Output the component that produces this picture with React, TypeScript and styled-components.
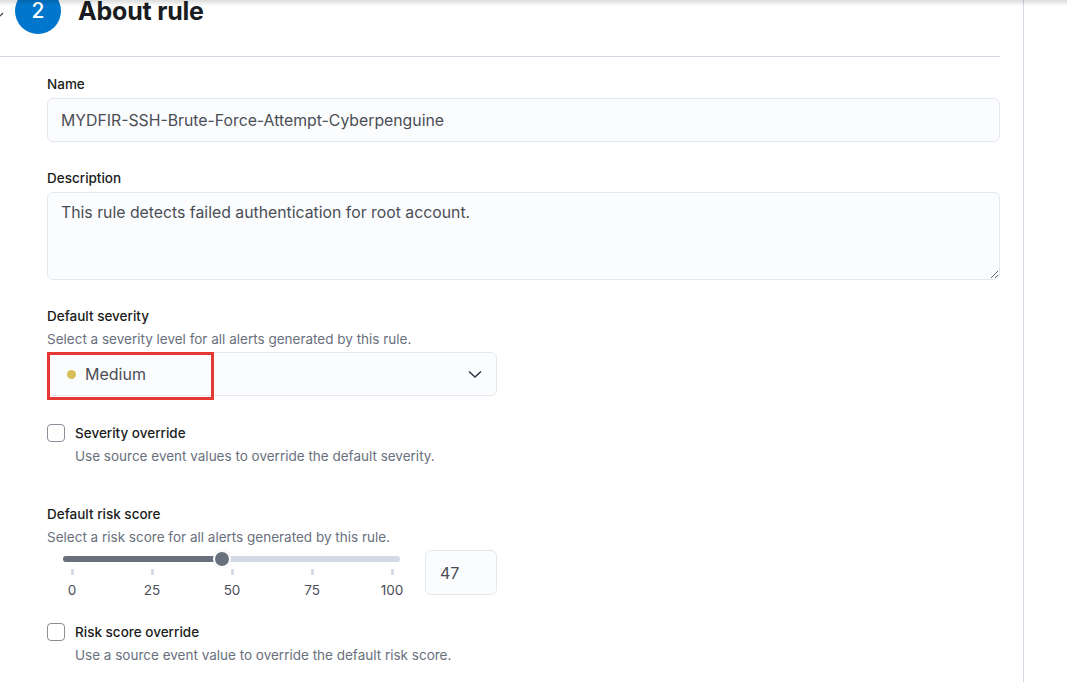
import React from "react";
import styled, { createGlobalStyle } from "styled-components";

const GlobalStyle = createGlobalStyle`
    html, body {
        margin: 0;
        padding: 0;
        background: #ffffff;
        font-family: Inter, "Noto Sans", sans-serif;
        color: #343741;
        overflow: hidden;
    }
`;

const Page = styled.div`
    position: relative;
    display: flex;
    width: 1067px;
    height: 682px;
    overflow: hidden;
`;

const TopShadow = styled.div`
    position: absolute;
    top: 0;
    left: 0;
    right: 0;
    height: 6px;
    background: linear-gradient(to bottom, rgba(0, 0, 0, 0.14), rgba(0, 0, 0, 0));
    pointer-events: none;
    z-index: 2;
`;

const Panel = styled.div`
    width: 1000px;
    padding-right: 23px;
    border-right: 1px solid #d3dae6;
    flex-shrink: 0;
`;

const StepHeader = styled.div`
    display: flex;
    align-items: center;
    height: 69px;
    padding-bottom: 23px;
    margin-top: -12px;
    border-bottom: 1px solid #d3dae6;
    box-sizing: border-box;
`;

const Collapse = styled.svg`
    width: 8px;
    height: 8px;
    margin-left: -4px;
    margin-top: 8px;
    color: #343741;
`;

const StepNumber = styled.div`
    width: 46px;
    height: 46px;
    margin-left: 11px;
    border-radius: 50%;
    background: #0077cc;
    color: #ffffff;
    display: flex;
    align-items: center;
    justify-content: center;
    font-size: 21px;
    font-weight: 500;
`;

const StepTitle = styled.h2`
    margin: 0 0 0 17px;
    font-size: 25px;
    font-weight: 700;
    color: #1a1c21;
    letter-spacing: -0.2px;
`;

const Form = styled.div`
    display: flex;
    flex-direction: column;
    padding: 18px 0 0 47px;
`;

const Field = styled.div<{ gap?: number }>`
    display: flex;
    flex-direction: column;
    margin-bottom: ${({ gap }) => gap ?? 0}px;
`;

const Label = styled.div`
    font-size: 13.5px;
    font-weight: 500;
    color: #1a1c21;
    line-height: 18px;
    margin-bottom: 5px;
`;

const Help = styled.div<{ indent?: boolean }>`
    font-size: 13.5px;
    color: #69707d;
    line-height: 18px;
    margin-top: ${({ indent }) => (indent ? "5px" : "0")};
    margin-bottom: ${({ indent }) => (indent ? "0" : "4px")};
    padding-left: ${({ indent }) => (indent ? "28px" : "0")};
`;

const TextInput = styled.div`
    height: 44px;
    box-sizing: border-box;
    background: #fbfcfd;
    border: 1px solid #e4e7ee;
    border-radius: 6px;
    padding: 0 13px;
    display: flex;
    align-items: center;
    font-size: 15.8px;
    color: #4a4e57;
`;

const TextArea = styled.textarea`
    height: 88px;
    box-sizing: border-box;
    background: #fbfcfd;
    border: 1px solid #e4e7ee;
    border-radius: 6px;
    padding: 9px 13px;
    font-family: Inter, "Noto Sans", sans-serif;
    font-size: 15.8px;
    line-height: 22px;
    color: #4a4e57;
    resize: vertical;
    outline: none;
`;

const SelectWrap = styled.div`
    position: relative;
    width: 450px;
`;

const Select = styled.div`
    height: 44px;
    box-sizing: border-box;
    background: #fbfcfd;
    border: 1px solid #e4e7ee;
    border-radius: 6px;
    padding: 0 13px 0 19px;
    display: flex;
    align-items: center;
    gap: 9px;
    font-size: 16px;
    color: #4a4e57;
`;

const Dot = styled.span<{ color: string }>`
    width: 9px;
    height: 9px;
    border-radius: 50%;
    background: ${({ color }) => color};
`;

const Caret = styled.svg`
    margin-left: auto;
    width: 16px;
    height: 16px;
`;

const Highlight = styled.div`
    position: absolute;
    left: 0;
    top: 0;
    width: 167px;
    height: 48px;
    box-sizing: border-box;
    border: 3px solid #e53935;
    pointer-events: none;
`;

const CheckRow = styled.div`
    display: flex;
    align-items: center;
    gap: 10px;
`;

const Checkbox = styled.span`
    width: 18px;
    height: 18px;
    box-sizing: border-box;
    border: 1px solid #8a8f99;
    border-radius: 4px;
    background: #ffffff;
`;

const CheckLabel = styled.span`
    font-size: 13.5px;
    font-weight: 500;
    color: #1a1c21;
`;

const RangeRow = styled.div`
    display: flex;
    align-items: flex-start;
    gap: 10px;
`;

const Range = styled.div`
    width: 368px;
    padding: 6px 0 0 16px;
    box-sizing: border-box;
`;

const Track = styled.div`
    position: relative;
    width: 337px;
    height: 6px;
    border-radius: 3px;
    background: #d3dae6;
`;

const Fill = styled.div`
    height: 100%;
    border-radius: 3px;
    background: #69707d;
`;

const Thumb = styled.div`
    position: absolute;
    top: 50%;
    width: 14px;
    height: 14px;
    border-radius: 50%;
    background: #69707d;
    border: 2px solid #ffffff;
    transform: translate(-50%, -50%);
    box-shadow: 0 0 1px rgba(0, 0, 0, 0.2);
`;

const Ticks = styled.div`
    display: flex;
    justify-content: space-between;
    width: 360px;
    margin-left: -11px;
    margin-top: 7px;
`;

const Tick = styled.div`
    width: 40px;
    display: flex;
    flex-direction: column;
    align-items: center;
    gap: 7px;
    font-size: 13.5px;
    color: #4a4e57;
`;

const TickMark = styled.span`
    width: 3px;
    height: 6px;
    border-radius: 1px;
    background: #d3dae6;
`;

const NumberBox = styled.div`
    width: 72px;
    height: 45px;
    box-sizing: border-box;
    background: #fbfcfd;
    border: 1px solid #e4e7ee;
    border-radius: 6px;
    padding-left: 14px;
    display: flex;
    align-items: center;
    font-size: 16px;
    color: #4a4e57;
`;

const ticks = [0, 25, 50, 75, 100];
const riskScore = 47;

const App = () => (
    <Page>
        <GlobalStyle />
        <TopShadow />
        <Panel>
            <StepHeader>
                <Collapse viewBox="0 0 8 8">
                    <path d="M1 2 L4 5 L7 2" fill="none" stroke="currentColor" strokeWidth="1.2" />
                </Collapse>
                <StepNumber>2</StepNumber>
                <StepTitle>About rule</StepTitle>
            </StepHeader>
            <Form>
                <Field gap={27}>
                    <Label>Name</Label>
                    <TextInput>MYDFIR-SSH-Brute-Force-Attempt-Cyberpenguine</TextInput>
                </Field>
                <Field gap={27}>
                    <Label>Description</Label>
                    <TextArea readOnly value="This rule detects failed authentication for root account." />
                </Field>
                <Field gap={28}>
                    <Label>Default severity</Label>
                    <Help>Select a severity level for all alerts generated by this rule.</Help>
                    <SelectWrap>
                        <Select>
                            <Dot color="#d6bf57" />
                            Medium
                            <Caret viewBox="0 0 16 16">
                                <path d="M2 5.5 L8 11 L14 5.5" fill="none" stroke="#343741" strokeWidth="1.6" />
                            </Caret>
                        </Select>
                        <Highlight />
                    </SelectWrap>
                </Field>
                <Field gap={40}>
                    <CheckRow>
                        <Checkbox />
                        <CheckLabel>Severity override</CheckLabel>
                    </CheckRow>
                    <Help indent>Use source event values to override the default severity.</Help>
                </Field>
                <Field gap={25}>
                    <Label>Default risk score</Label>
                    <Help>Select a risk score for all alerts generated by this rule.</Help>
                    <RangeRow>
                        <Range>
                            <Track>
                                <Fill style={{ width: `${(riskScore / 100) * 320 + 9}px` }} />
                                <Thumb style={{ left: `${(riskScore / 100) * 320 + 9}px` }} />
                            </Track>
                            <Ticks>
                                {ticks.map((t) => (
                                    <Tick key={t}>
                                        <TickMark />
                                        {t}
                                    </Tick>
                                ))}
                            </Ticks>
                        </Range>
                        <NumberBox>{riskScore}</NumberBox>
                    </RangeRow>
                </Field>
                <Field>
                    <CheckRow>
                        <Checkbox />
                        <CheckLabel>Risk score override</CheckLabel>
                    </CheckRow>
                    <Help indent>Use a source event value to override the default risk score.</Help>
                </Field>
            </Form>
        </Panel>
    </Page>
);

export default App;
